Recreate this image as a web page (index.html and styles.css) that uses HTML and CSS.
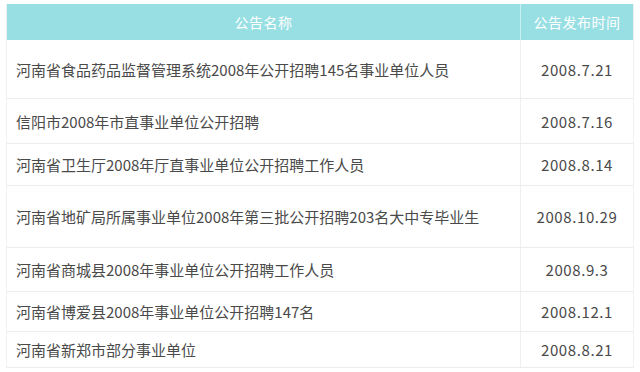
FILE: index.html
```html
<!DOCTYPE html>
<html lang="zh-CN">
<head>
<meta charset="utf-8">
<title>公告</title>
<link rel="stylesheet" href="styles.css">
</head>
<body>
<div class="table">
  <div class="row head">
    <div class="c-name">公告名称</div>
    <div class="c-date">公告发布时间</div>
  </div>
  <div class="row r1">
    <div class="c-name">河南省食品药品监督管理系统2008年公开招聘145名事业单位人员</div>
    <div class="c-date">2008.7.21</div>
  </div>
  <div class="row r2">
    <div class="c-name">信阳市2008年市直事业单位公开招聘</div>
    <div class="c-date">2008.7.16</div>
  </div>
  <div class="row r3">
    <div class="c-name">河南省卫生厅2008年厅直事业单位公开招聘工作人员</div>
    <div class="c-date">2008.8.14</div>
  </div>
  <div class="row r4">
    <div class="c-name">河南省地矿局所属事业单位2008年第三批公开招聘203名大中专毕业生</div>
    <div class="c-date">2008.10.29</div>
  </div>
  <div class="row r5">
    <div class="c-name">河南省商城县2008年事业单位公开招聘工作人员</div>
    <div class="c-date">2008.9.3</div>
  </div>
  <div class="row r6">
    <div class="c-name">河南省博爱县2008年事业单位公开招聘147名</div>
    <div class="c-date">2008.12.1</div>
  </div>
  <div class="row r7">
    <div class="c-name">河南省新郑市部分事业单位</div>
    <div class="c-date">2008.8.21</div>
  </div>
</div>
</body>
</html>
```
FILE: styles.css
```css
html, body {
  margin: 0;
  padding: 0;
  background: #ffffff;
}
body {
  padding: 4px 6px 0 6px;
  font-family: "Noto Sans CJK SC", "Noto Sans", sans-serif;
  color: #4a4a4a;
}
.table {
  width: 628px;
  border-left: 1px solid #efefef;
  border-right: 1px solid #efefef;
  box-sizing: border-box;
}
.row {
  display: flex;
  box-sizing: border-box;
  border-bottom: 1px solid #ececec;
  font-size: 15px;
}
.c-name {
  width: 514px;
  box-sizing: border-box;
  padding-left: 9px;
  border-right: 1px solid #efefef;
  display: flex;
  align-items: center;
}
.c-date {
  flex: 1;
  display: flex;
  align-items: center;
  justify-content: center;
  letter-spacing: 0.6px;
}
.head {
  height: 36px;
  background: #98dfe4;
  color: #ffffff;
  font-size: 14px;
  border-bottom: none;
}
.head .c-name {
  justify-content: center;
  padding-left: 0;
  border-right: 1px solid #c9eff1;
  letter-spacing: 0.5px;
}
.head .c-date {
  letter-spacing: 0.5px;
}
.r1 { height: 59px; }
.r2 { height: 45px; }
.r3 { height: 42px; }
.r4 { height: 62px; }
.r5 { height: 44px; }
.r6 { height: 40px; }
.r7 { height: 36px; }
```
